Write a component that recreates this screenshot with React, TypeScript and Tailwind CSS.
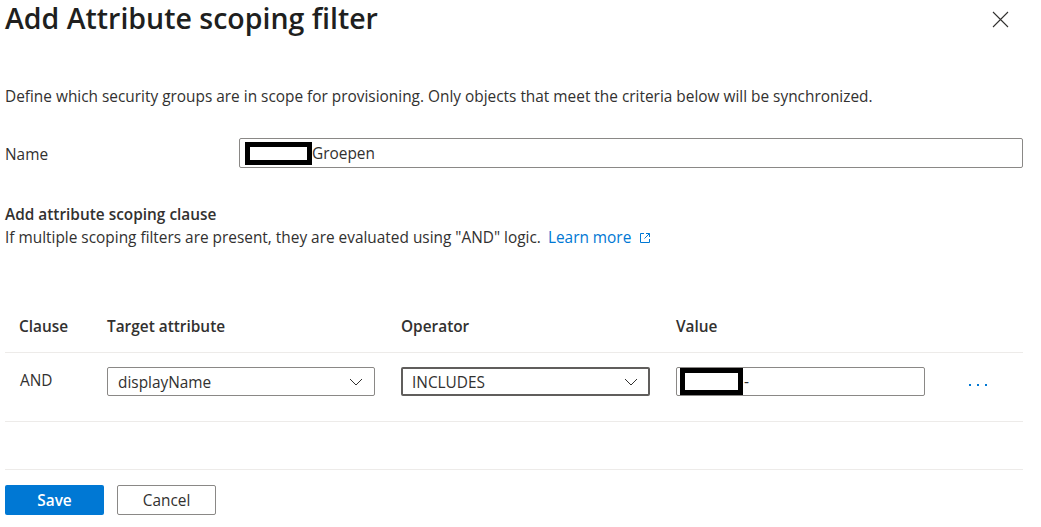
import React from 'react';

const font = { fontFamily: '"Open Sans", "Noto Sans", sans-serif' };

const Chevron = () => (
    <svg width="14" height="8" viewBox="0 0 14 8" fill="none" className="text-[#323130]">
        <path d="M1 1l6 6 6-6" stroke="currentColor" strokeWidth="1" />
    </svg>
);

const Redacted = ({ w, h }: { w: number; h: number }) => (
    <span
        className="inline-block border-[5px] border-black bg-white shrink-0"
        style={{ width: w, height: h }}
    />
);

const App = () => {
    return (
        <div className="w-[1041px] h-[527px] bg-white text-[#323130] px-[5px] overflow-hidden text-[15.4px]" style={font}>
            <div className="flex items-start justify-between h-[36px]">
                <h1 className="text-[28.5px] leading-[36px] font-semibold text-[#201f1e]">
                    Add Attribute scoping filter
                </h1>
                <button className="mt-[11px] mr-[27px] text-[#323130]">
                    <svg width="17" height="17" viewBox="0 0 17 17" fill="none">
                        <path d="M1 1l15 15M16 1L1 16" stroke="currentColor" strokeWidth="1.1" />
                    </svg>
                </button>
            </div>

            <p className="mt-[51px] leading-[20px]">
                Define which security groups are in scope for provisioning. Only objects that meet the criteria below will be synchronized.
            </p>

            <div className="mt-[31px] flex items-center h-[30px]">
                <span className="w-[234px] pt-[3px]">Name</span>
                <div className="flex-1 h-[30px] border border-[#8a8886] rounded-[2px] flex items-center pl-[5px] mr-[13px]">
                    <Redacted w={67} h={23} />
                    <span className="pt-[2px]">Groepen</span>
                </div>
            </div>

            <div className="mt-[37px]">
                <h2 className="leading-[20px] font-semibold">Add attribute scoping clause</h2>
                <p className="mt-[3px] leading-[20px] flex items-center">
                    If multiple scoping filters are present, they are evaluated using "AND" logic.
                    <a className="ml-[7px] text-[#0078d4] flex items-center">
                        Learn more
                        <svg className="ml-[8px]" width="12" height="12" viewBox="0 0 12 12" fill="none">
                            <path d="M5 1.5H1.5v9h9V7" stroke="currentColor" strokeWidth="1" />
                            <path d="M7 1.5h3.5V5M10.5 1.5L5.5 6.5" stroke="currentColor" strokeWidth="1" />
                        </svg>
                    </a>
                </p>
            </div>

            <div className="mt-[54px] mr-[13px]">
                <div className="grid grid-cols-[102px_294px_275px_1fr] h-[51px] pb-[1px] items-center border-b border-[#edebe9] font-semibold">
                    <span className="pl-[14px]">Clause</span>
                    <span>Target attribute</span>
                    <span>Operator</span>
                    <span>Value</span>
                </div>
                <div className="grid grid-cols-[102px_294px_275px_1fr] h-[69px] items-start pt-[14px] border-b border-[#edebe9]">
                    <span className="pl-[15px] leading-[29px] -mt-[1px]">AND</span>
                    <div className="w-[268px] h-[29px] border border-[#8a8886] rounded-[2px] flex items-center justify-between pl-[10px] pr-[11px]">
                        <span className="pt-[2px]">displayName</span>
                        <Chevron />
                    </div>
                    <div className="w-[249px] h-[29px] border-2 border-[#605e5c] rounded-[2px] flex items-center justify-between pl-[9px] pr-[10px]">
                        <span className="pt-[2px]">INCLUDES</span>
                        <Chevron />
                    </div>
                    <div className="flex items-center">
                        <div className="w-[249px] h-[29px] border border-[#8a8886] rounded-[2px] flex items-center pl-[3px]">
                            <Redacted w={63} h={27} />
                            <span className="ml-[1px]">-</span>
                        </div>
                        <div className="ml-[44px] flex gap-[6px] pt-[6px]">
                            <span className="w-[2px] h-[2px] bg-[#0078d4]" />
                            <span className="w-[2px] h-[2px] bg-[#0078d4]" />
                            <span className="w-[2px] h-[2px] bg-[#0078d4]" />
                        </div>
                    </div>
                </div>
                <div className="h-[48px] border-b border-[#edebe9]" />
            </div>

            <div className="mt-[15px] flex gap-[13px]">
                <button className="w-[99px] h-[30px] pt-[2px] bg-[#0078d4] text-white rounded-[2px] font-semibold">
                    Save
                </button>
                <button className="w-[99px] h-[30px] pt-[2px] bg-white border border-[#8a8886] rounded-[2px] text-[#323130]">
                    Cancel
                </button>
            </div>
        </div>
    );
};

export default App;
